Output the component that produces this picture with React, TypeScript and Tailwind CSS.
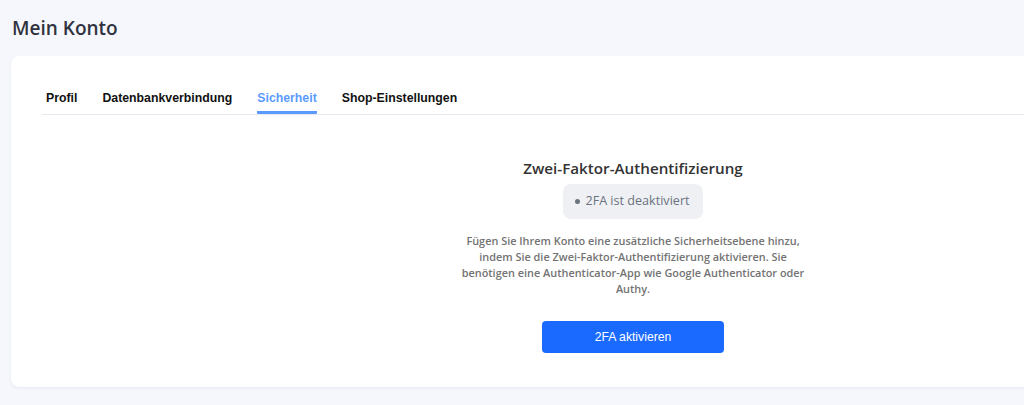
export default function App() {
  const tabs = ["Profil", "Datenbankverbindung", "Sicherheit", "Shop-Einstellungen"]
  const active = "Sicherheit"

  return (
    <div className="h-[405px] w-full overflow-hidden bg-[#f6f7fd]">
      <div className="w-[1266px] px-[11px] pt-[14px]">
        <h1 className="pl-px text-[19px] leading-[28px] font-semibold text-[#30333f] [font-family:'Open_Sans',sans-serif]">
          Mein Konto
        </h1>

        <div className="mt-[14px] rounded-lg bg-white px-[31px] pt-[30px] pb-[34px] shadow-[0_1px_3px_rgba(30,35,90,0.08)]">
          <div className="flex gap-[25px] border-b border-[#e6e8ef] pl-[4px] [font-family:'Liberation_Sans',Arial,sans-serif]">
            {tabs.map((tab) => (
              <button
                key={tab}
                type="button"
                className={`border-b-[3px] pt-[4px] pb-[5px] text-[12.3px] leading-[16px] font-bold ${tab === active ? "rounded-b-[1px] border-[#5b9bff] text-[#5b9bff]" : "border-transparent text-[#111]"}`}
              >
                {tab}
              </button>
            ))}
          </div>

          <div className="flex flex-col items-center pt-[41px] [font-family:'Open_Sans',sans-serif]">
            <h2 className="text-[15.2px] leading-[24px] font-semibold text-[#333]">
              Zwei-Faktor-Authentifizierung
            </h2>
            <div className="mt-[4px] flex h-[35px] items-center gap-[5px] rounded-lg bg-[#eef0f3] pr-[13px] pl-[12px] text-[12.6px] text-[#6b7280]">
              <span className="h-[5px] w-[5px] rounded-full bg-[#6b7280]" />
              2FA ist deaktiviert
            </div>
            <p className="mt-[14px] max-w-[350px] text-center text-[10.9px] leading-[16px] font-semibold text-[#737373]">
              Fügen Sie Ihrem Konto eine zusätzliche Sicherheitsebene hinzu, indem Sie die Zwei-Faktor-Authentifizierung aktivieren. Sie benötigen eine Authenticator-App wie Google Authenticator oder Authy.
            </p>
            <button
              type="button"
              className="mt-[24px] h-[32px] w-[182px] rounded-[4px] bg-[#1a6aff] text-[12.2px] text-white [font-family:'Liberation_Sans',Arial,sans-serif]"
            >
              2FA aktivieren
            </button>
          </div>
        </div>
      </div>
    </div>
  )
}
